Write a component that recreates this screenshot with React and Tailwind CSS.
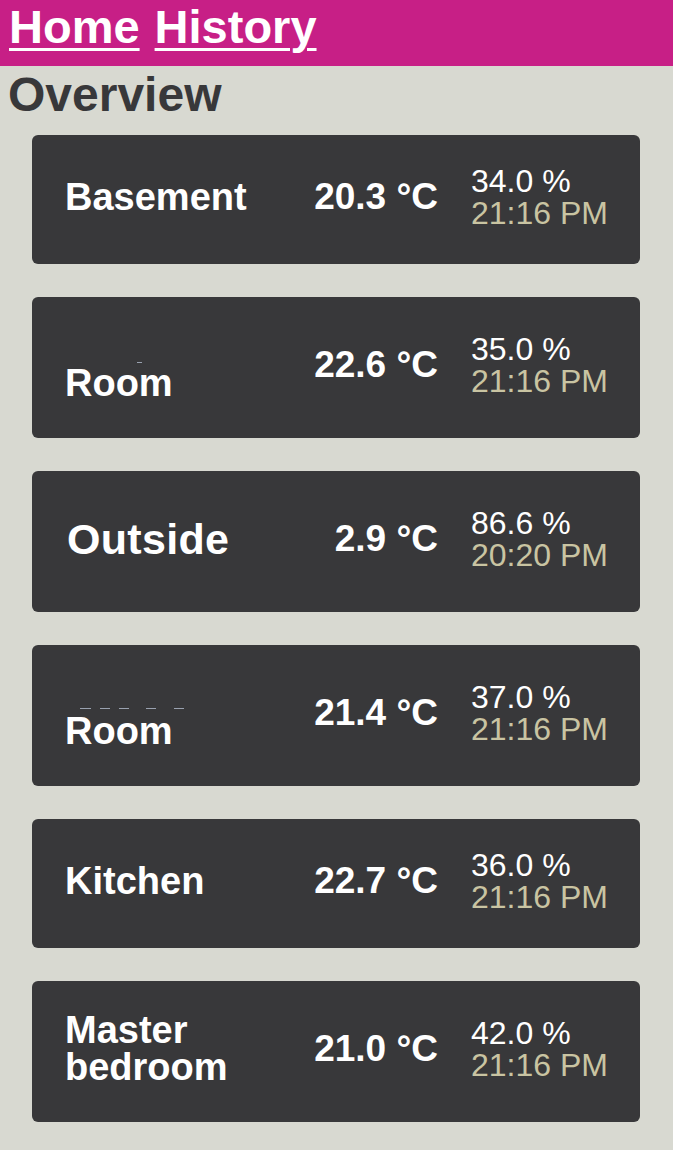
const sensors = [
  { name: "Basement", temp: "20.3 °C", hum: "34.0 %", time: "21:16 PM" },
  { name: "Room", hidden: "single", temp: "22.6 °C", hum: "35.0 %", time: "21:16 PM", tall: true },
  { name: "Outside", big: true, temp: "2.9 °C", hum: "86.6 %", time: "20:20 PM", tall: true },
  { name: "Room", hidden: "dashes", temp: "21.4 °C", hum: "37.0 %", time: "21:16 PM", tall: true },
  { name: "Kitchen", temp: "22.7 °C", hum: "36.0 %", time: "21:16 PM" },
  { name: "Master bedroom", temp: "21.0 °C", hum: "42.0 %", time: "21:16 PM", tall: true },
];

// the clipped first line of a room name, only its marks show
const HiddenLine = ({ kind }) => {
  if (kind === "single") {
    return (
      <div className="h-[37px] flex items-end pb-[2px] pl-[72px]">
        <span className="h-px w-[5px] bg-gray-400" />
      </div>
    );
  }
  return (
    <div className="h-[37px] flex items-end pb-[4px] pl-[15px] gap-[9px]">
      <span className="h-px w-[11px] bg-gray-400" />
      <span className="h-px w-[10px] bg-gray-400" />
      <span className="h-px w-[10px] bg-gray-400" />
      <span className="h-px w-[10px] bg-gray-400 ml-[8px]" />
      <span className="h-px w-[10px] bg-gray-400 ml-[9px]" />
    </div>
  );
};

const SensorCard = ({ s }) => {
  return (
    <div
      className={`flex items-center px-[33px] pb-[5px] rounded-[6px] bg-[#38383a] ${
        s.tall ? "h-[141px]" : "h-[129px]"
      }`}
    >
      <div className="flex-1 min-w-0 text-white font-bold">
        {s.hidden && <HiddenLine kind={s.hidden} />}
        {s.big ? (
          <p className="text-[43px] leading-[43px] pl-[2px] tracking-[0.3px]">{s.name}</p>
        ) : (
          <p className="text-[38px] leading-[37px]">{s.name}</p>
        )}
      </div>
      <div className="w-[140px] text-right whitespace-nowrap text-white font-bold text-[37px] leading-[40px]">
        {s.temp}
      </div>
      {/* humidity on the first line, time of reading below */}
      <p className="ml-[33px] w-[136px] whitespace-pre text-[32px] leading-[32px] text-[#c9c4a2] first-line:text-white">
        {`${s.hum}\n${s.time}`}
      </p>
    </div>
  );
};

export default function App() {
  return (
    <div
      className="min-h-[1150px] bg-[#d8d9d1]"
      style={{ fontFamily: '"Liberation Sans", Arial, sans-serif' }}
    >
      <nav className="h-[66px] bg-[#c71f86] flex items-start gap-[15px] pl-[9px] pt-[3px]">
        <a href="#" className="text-white font-bold text-[47px] leading-none underline decoration-[3px] underline-offset-[5px]">
          Home
        </a>
        <a href="#" className="text-white font-bold text-[47px] leading-none underline decoration-[3px] underline-offset-[5px]">
          History
        </a>
      </nav>
      <h1 className="mt-[5px] mb-[16px] pl-[8px] text-[48px] leading-none font-bold text-[#38383a]">
        Overview
      </h1>
      <div className="flex flex-col gap-[33px] ml-[32px] mr-[33px] pb-[28px]">
        {sensors.map((s, i) => (
          <SensorCard key={i} s={s} />
        ))}
      </div>
    </div>
  );
}
